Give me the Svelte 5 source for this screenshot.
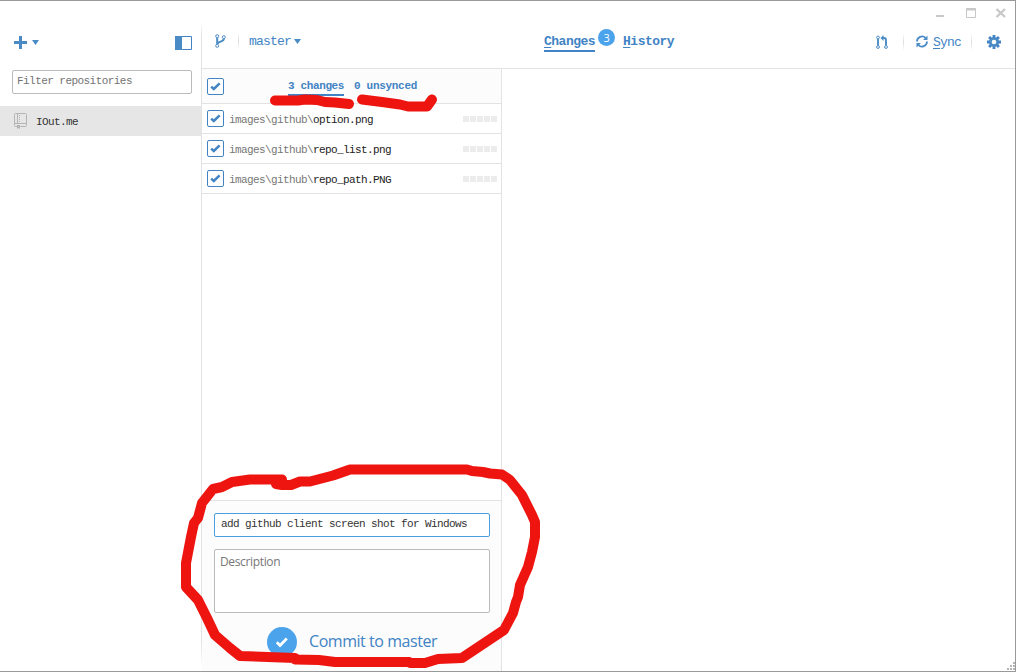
<script>
  const files = ['option.png', 'repo_list.png', 'repo_path.PNG'];
</script>

{#snippet check()}
  <span class="check">
    <svg width="17" height="17" viewBox="0 0 17 17"><path d="M4.2 8.6 6.8 11 12.6 5.4" fill="none" stroke="#4284c4" stroke-width="2.5" /></svg>
  </span>
{/snippet}

<div class="window">
  <aside>
    <div class="sidetop">
      <svg width="27" height="14" viewBox="0 0 27 14" fill="#4a8bc6"><path d="M0 6h5V1h3v5h5v3H8v5H5V9H0zM18 5h7l-3.5 5z" /></svg>
      <svg width="17" height="14" viewBox="0 0 17 14"><path d="M.5.5h16v13H.5z" fill="#fff" stroke="#4183c4" /><path d="M0 0h7v14H0z" fill="#4a8bc6" /></svg>
    </div>
    <div class="filter mono">Filter repositories</div>
    <div class="repo mono">
      <svg width="13" height="16" viewBox="0 0 13 16" fill="none" stroke="#b4b4b4"><path d="M3.5 13.5h-2q-1 0-1-1v-11q0-1 1-1h10q1 0 1 1v11q0 1-1 1h-5M.5 10.5h12M3.5.5v10" /><path d="M5.500 2v7" stroke-dasharray="1 1" /><path d="M3 12h3v4l-1.500-1L3 16z" fill="#b4b4b4" stroke="none" /></svg>
      <span>IOut.me</span>
    </div>
  </aside>

  <main>
    <div class="controls">
      <svg width="70" height="12" viewBox="0 0 70 12" fill="none" stroke="#c8c8c8"><path d="M0 9h8" stroke-width="2" /><path d="M30.5 1.5h9v9h-9z" /><path d="M30 2.5h10" stroke-width="2" /><path d="m60.500 2 8.500 8m0-8-8.500 8" stroke-width="2.4" /></svg>
    </div>
    <header>
      <div class="branch">
        <svg width="11" height="14" viewBox="0 0 11 14" fill="none" stroke="#4a8bc6"><circle cx="2.2" cy="2.2" r="1.5" /><circle cx="8.8" cy="3.2" r="1.5" /><circle cx="2.2" cy="11.8" r="1.5" /><path d="M2.2 4v6M8.8 5c0 3-6.2 2.2-6.2 5" stroke-width="2" /></svg>
        <i class="sep"></i>
        <span class="mono master">master</span>
        <svg class="caret" width="7" height="5" viewBox="0 0 7 5"><path d="M0 0h7L3.5 5z" fill="#4a8bc6" /></svg>
      </div>
      <nav>
        <span class="tab mono active"><u>C</u>hanges</span>
        <span class="count">3</span>
        <span class="tab mono"><u>H</u>istory</span>
      </nav>
      <div class="tools">
        <svg width="12" height="14" viewBox="0 0 12 14" fill="none" stroke="#4a8bc6"><circle cx="2" cy="2.500" r="1.4" /><circle cx="2" cy="12" r="1.4" /><circle cx="10" cy="12" r="1.4" /><path d="M2 4v6.500M10 10.500V5.200Q10 3 8 3H6" stroke-width="1.9" /><path d="M7.500 0v6l-3-3z" fill="#4a8bc6" stroke="none" /></svg>
        <i class="sep first"></i>
        <svg class="syncicon" width="12" height="13" viewBox="0 0 12 13"><path d="M1 6.500A5 5 0 0 1 9.600 3M11 6.500A5 5 0 0 1 2.400 10" fill="none" stroke="#4a8bc6" stroke-width="1.8" /><path d="M11.500.5V5H7zM.5 12.500V8H5z" fill="#4a8bc6" /></svg>
        <span class="sync mono"><u>S</u>ync</span>
        <i class="sep second"></i>
        <svg width="14" height="14" viewBox="0 0 14 14"><g stroke="#4183c4" stroke-width="2.8"><path d="M7 0v14M0 7h14M2.1 2.1l9.8 9.8M11.9 2.1l-9.800 9.800" /></g><circle cx="7" cy="7" r="5.1" fill="#4a8bc6" /><circle cx="7" cy="7" r="2.3" fill="#fff" /></svg>
      </div>
    </header>

    <section>
      <div class="summary">
        {@render check()}
        <div class="totals"><span class="mono selected">3 changes</span><span class="mono">0 unsynced</span></div>
      </div>
      {#each files as file}
        <div class="file">
          {@render check()}
          <span class="mono path">images\github\<b>{file}</b></span>
          <span class="blocks">{#each Array(5) as _}<i></i>{/each}</span>
        </div>
      {/each}
      <div class="space"></div>
      <form>
        <div class="title mono">add github client screen shot for Windows</div>
        <div class="description">Description</div>
        <div class="commit">
          <svg width="30" height="30" viewBox="0 0 30 30"><circle cx="15" cy="15" r="15" fill="#4aa3eb" /><path d="m9.800 15.300 3.200 3.200 6.800-7" fill="none" stroke="#fff" stroke-width="2.7" /></svg>
          <span>Commit to master</span>
        </div>
      </form>
    </section>
  </main>

  <svg class="marks" width="1016" height="672" viewBox="0 0 1016 672">
    <path d="M275 100.500H298L305 99.500 317 100 325 102 335 102.500 349 104" />
    <path d="M362 99.500 382 102 400 104.500 408 106.500 427 106.500 432 99.500" />
    <path d="M282 479.500 276 484 282 485H291L300 481.500H310L333 475.500 350 469.500H467L472 471 483 472 490 473.500 502 474.500 510 480 522 495 532 515 535 522V537L532 552 528 567 520 585 518 597 516 602 513 613 504 630 483 644 462 658 438 659 425 663H410L409 662H335L319 660 295 659.500V658L240 656 230 648 215 635 207 618 198 600 186 587V563L191 537 194 523 198 518 202 503 213 489 222 487 232 482 250 479.500Z" />
  </svg>
  <svg class="grip" width="8" height="8" viewBox="0 0 8 8" fill="#b5b5b5"><path d="M6 0h2v2H6zM3 3h2v2H3zM6 3h2v2H6zM0 6h2v2H0zM3 6h2v2H3zM6 6h2v2H6z" /></svg>
</div>

<style>
  .window { position: relative; display: flex; width: 1016px; height: 672px; box-sizing: border-box; border-top: 1px solid #999; border-right: 1px solid #999; border-bottom: 1px solid #999; background: #fff; overflow: hidden; color: #4183c4; }
  .window * { box-sizing: border-box; }
  svg { display: block; flex: none; }
  .mono { font-family: "Liberation Mono", monospace; font-size: 11px; letter-spacing: -0.6px; white-space: pre; }
  aside { width: 201px; flex: none; padding-top: 35px; }
  .sidetop { display: flex; justify-content: space-between; padding: 0 9px 0 14px; height: 34px; }
  .sidetop svg:first-child { margin-top: -1px; }
  .filter { margin-left: 12px; width: 180px; height: 24px; border: 1px solid #bbb; border-radius: 2px; color: #737373; padding-left: 4px; line-height: 20px; letter-spacing: -0.55px; }
  .repo { margin-top: 12px; height: 30px; background: #e6e6e6; color: #333; display: flex; align-items: center; gap: 9px; padding-left: 14px; }
  .repo svg { margin-top: -1px; }
  .repo span { margin-top: 1px; }
  main { flex: 1; min-width: 0; display: flex; flex-direction: column; border-left: 1px solid; border-image: linear-gradient(#fff 22px, #e3e3e3 35px, #e3e3e3 640px, #fff 665px) 1; }
  .controls { height: 23px; display: flex; justify-content: flex-end; padding: 6px 9px 0 0; }
  header { height: 45px; flex: none; display: flex; border-bottom: 1px solid #e3e3e3; }
  .branch { width: 342px; height: 34px; display: flex; align-items: center; padding-left: 13px; }
  .sep { width: 1px; height: 18px; background: linear-gradient(#fff, #ddd, #fff); }
  .branch .sep { margin: 0 10px 0 12px; }
  .master { font-size: 13px; letter-spacing: -0.8px; line-height: 34px; margin-top: 2px; }
  .caret { margin-left: 3px; }
  nav { width: 320px; display: flex; padding-top: 9px; }
  .tab { height: 19px; font-size: 13px; letter-spacing: -0.51px; font-weight: bold; line-height: 17px; }
  .active { border-bottom: 2px solid #4183c4; }
  .count { width: 17px; height: 17px; margin: -4px 8px 0 3px; border-radius: 50%; background: #4aa3eb; color: #fff; font: 11px/17px "Open Sans", sans-serif; text-align: center; }
  .tools { display: flex; align-items: center; height: 34px; padding: 1px 0 0 12px; }
  .first { margin: 0 12px 0 15px; }
  .second { margin: 0 15px 0 10px; }
  .sync { font-size: 13px; letter-spacing: -0.8px; margin: 1px 0 0 5px; }
  u { text-underline-offset: 2px; text-decoration-thickness: 1px; }
  section { width: 300px; flex: 1; display: flex; flex-direction: column; border-right: 1px solid #e3e3e3; }
  .summary { height: 35px; display: flex; align-items: center; padding-left: 5px; background: #fcfcfc; border-bottom: 1px solid #e3e3e3; }
  .check { flex: none; width: 17px; height: 17px; border: 1px solid #4183c4; border-radius: 2px; background: #fff; }
  .check svg { margin: -1px; }
  .totals { display: flex; gap: 10px; margin-left: 64px; margin-top: 1px; }
  .totals span { font-weight: bold; letter-spacing: -0.3px; line-height: 17px; height: 18px; }
  .totals .selected { border-bottom: 2px solid #4183c4; width: 56px; letter-spacing: -0.37px; }
  .file { height: 30px; display: flex; align-items: center; border-bottom: 1px solid #e3e3e3; padding-left: 5px; }
  .path { margin: 2px 0 0 5px; color: #777; flex: 1; }
  .path b { color: #222; font-weight: normal; }
  .blocks { display: flex; gap: 1px; margin-right: 4px; }
  .blocks i { width: 6px; height: 6px; background: #ececec; }
  .space { flex: 1; }
  form { height: 171px; border-top: 1px solid #e3e3e3; background: #fcfcfc; padding: 12px 11px 0 12px; }
  .title, .description { border: 1px solid #bbb; border-radius: 2px; background: #fff; }
  .title { height: 24px; border-color: #4a9fe0; padding-left: 6px; line-height: 20px; color: #333; }
  .description { margin-top: 12px; height: 64px; font: 12px/23px "Open Sans", sans-serif; color: #777; padding-left: 5px; letter-spacing: -0.35px; }
  .commit { display: flex; gap: 12px; padding: 14px 0 0 53px; font: 16px/28px "Open Sans", sans-serif; letter-spacing: -0.45px; }
  .marks { position: absolute; left: 0; top: -1px; fill: none; stroke: #ee1511; stroke-width: 10; stroke-linecap: round; stroke-linejoin: round; }
  .grip { position: absolute; right: 0; bottom: 1px; }
</style>
